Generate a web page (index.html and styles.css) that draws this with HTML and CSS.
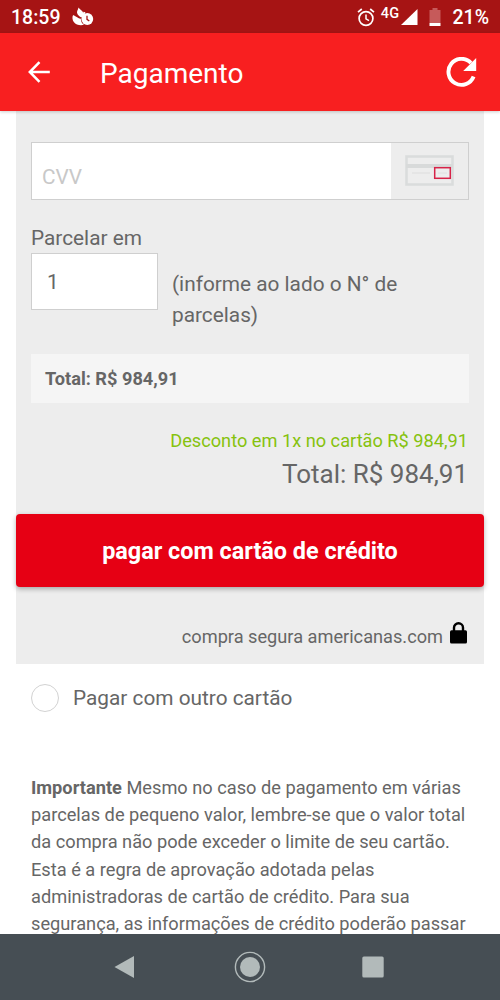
FILE: index.html
```html
<!DOCTYPE html>
<html lang="pt-BR">
<head>
<meta charset="utf-8">
<title>Pagamento</title>
<link rel="stylesheet" href="styles.css">
</head>
<body>
<div class="screen">
  <div class="status">
    <span class="clock">18:59</span>
    <svg class="swirl" width="23" height="20" viewBox="0 0 23 20">
      <path d="M6.500 .5C7.500 2.500 10.500 3.500 11.300 6C11.500 8 10.500 9 9.500 10.500C7.500 9.500 5.300 8 5 5.500C4.900 3.500 6.300 2.500 6.500 .5Z" fill="#fff"/>
      <path d="M1 8.200C3 8.200 5 11 8.800 11.800C9 14.500 10 16.800 12 17.800C8.500 18.800 4 18 1.800 15C.4 13 0 10 1 8.200Z" fill="#fff"/>
      <path d="M12.500 5L10.500 10" stroke="#fff" stroke-width="2"/>
      <circle cx="15.300" cy="12" r="5.900" fill="#fff"/>
      <path d="M15 8.700V12.300L17.300 14" fill="none" stroke="#a61414" stroke-width="1.300"/>
    </svg>
    <div class="indicators">
      <svg class="alarm" width="18" height="19" viewBox="0 0 18 19" fill="none" stroke="#fff">
        <circle cx="9" cy="10.500" r="6.900" stroke-width="1.700"/>
        <path d="M9 6.500V10.800L12 12.600" stroke-width="1.500"/>
        <path d="M1 4.200L4.800 1M17 4.200L13.200 1" stroke-width="1.700"/>
      </svg>
      <span class="net">4G</span>
      <svg class="signal" width="17" height="16" viewBox="0 0 17 16"><path d="M16.500 0V16H0Z" fill="#fff"/></svg>
      <svg class="battery" width="12" height="19" viewBox="0 0 12 19">
        <path d="M3.500 0H8.500V2H11.500V15H.5V2H3.500Z" fill="#c65a5a"/>
        <path d="M.5 15H11.500V18H.5Z" fill="#fff"/>
      </svg>
      <span class="percent">21%</span>
    </div>
  </div>
  <header class="bar">
    <svg class="back" width="22" height="22" viewBox="0 0 22 22" fill="none" stroke="#fff" stroke-width="2.500"><path d="M21.800 11H2M11.500 1.200L1.800 11L11.500 20.800"/></svg>
    <h1 class="title">Pagamento</h1>
    <svg class="reload" width="31" height="31" viewBox="0 0 31 31">
      <path d="M25 6A13 13 0 1 0 27.600 19.500" fill="none" stroke="#fff" stroke-width="3.900"/>
      <path d="M30.200 1V14H17.200Z" fill="#fff"/>
    </svg>
  </header>
  <main class="content">
    <section class="panel">
      <div class="cvv">
        <span class="placeholder">CVV</span>
        <div class="cvv-help">
          <svg width="50" height="32" viewBox="0 0 50 32">
            <rect x="1.500" y="1.500" width="46" height="28" fill="none" stroke="#dadcdc" stroke-width="2.600"/>
            <path d="M1 11H48" stroke="#d8dada" stroke-width="4"/>
            <path d="M7 18H25" stroke="#e2e2e2" stroke-width="1.500"/>
            <rect x="29.700" y="12.700" width="15.600" height="10.600" fill="#ededed" stroke="#d72348" stroke-width="1.500"/>
            <path d="M33 18H42" stroke="#e0e0e0"/>
          </svg>
        </div>
      </div>
      <div class="label">Parcelar em</div>
      <div class="installments">
        <div class="number">1</div>
        <div class="hint">(informe ao lado o N° de<br>parcelas)</div>
      </div>
      <div class="subtotal">Total: R$ 984,91</div>
      <div class="discount">Desconto em 1x no cartão R$ 984,91</div>
      <div class="total">Total: R$ 984,91</div>
      <div class="pay">pagar com cartão de crédito</div>
      <div class="secure">
        <span>compra segura americanas.com</span>
        <svg width="17" height="22" viewBox="0 0 17 22">
          <rect y="8.300" width="17" height="13.200" rx="1.500"/>
          <path d="M4 10V5.800A4.500 4.500 0 0 1 13 5.800V10" fill="none" stroke="#000" stroke-width="2.400"/>
        </svg>
      </div>
    </section>
    <div class="other"><i class="radio"></i><span>Pagar com outro cartão</span></div>
    <p class="notice"><b>Importante</b> Mesmo no caso de pagamento em várias<br>parcelas de pequeno valor, lembre-se que o valor total<br>da compra não pode exceder o limite de seu cartão.<br>Esta é a regra de aprovação adotada pelas<br>administradoras de cartão de crédito. Para sua<br>segurança, as informações de crédito poderão passar</p>
  </main>
  <nav class="nav">
    <svg width="20" height="24" viewBox="0 0 20 24"><path d="M20 1V23L.5 12Z" fill="#b2baba"/></svg>
    <svg width="32" height="32" viewBox="0 0 32 32"><circle cx="16" cy="16" r="14.600" fill="none" stroke="#b2baba" stroke-width="1.400"/><circle cx="16" cy="16" r="10" fill="#b2baba"/></svg>
    <svg class="recent" width="22" height="22" viewBox="0 0 22 22"><rect x=".3" y=".5" width="21.400" height="21" rx="1.500" fill="#b2baba"/></svg>
  </nav>
</div>
</body>
</html>
```
FILE: styles.css
```css
* { box-sizing: border-box; }
body { margin: 0; font-family: Roboto, "Liberation Sans", sans-serif; color: #666; background: #fff; }
svg { display: block; flex: none; }
.screen { width: 500px; height: 1000px; display: flex; flex-direction: column; overflow: hidden; white-space: nowrap; }
.status { height: 33px; flex: none; background: #a61414; color: #fff; display: flex; align-items: center; padding: 2px 11px 0 11px; font-size: 19.500px; font-weight: 500; }
.swirl { margin-left: 12px; margin-top: -2px; }
.indicators { margin-left: auto; display: flex; align-items: center; }
.alarm { margin-top: -1px; }
.net { font-size: 14.500px; margin: -9px 2px 0 6px; letter-spacing: .3px; }
.signal { margin-top: -1px; }
.battery { margin: -1px 11px 0 11px; }
.bar { height: 78px; flex: none; background: #f81f20; color: #fff; display: flex; align-items: center; padding: 0 23px 0 28px; box-shadow: 0 1px 3px rgba(0,0,0,.2); z-index: 1; }
.title { margin: 2px 0 0 50px; font-size: 28px; font-weight: 400; }
.reload { margin: 0 0 0 auto; }
.content { flex: 1; min-height: 0; overflow: hidden; padding: 0 16px; }
.panel { height: 553px; background: #ededed; padding: 31px 15px 0; }
.cvv { height: 58px; border: 1.500px solid #cfcfcf; background: #fff; display: flex; justify-content: space-between; }
.placeholder { color: #c8c8c8; font-size: 20.800px; line-height: 24px; padding: 22px 0 0 10px; }
.cvv-help { width: 77px; background: #ededed; padding: 12px 0 0 14px; }
.label { font-size: 20.800px; line-height: 24px; margin-top: 26px; }
.installments { display: flex; margin-top: 3px; }
.number { width: 127px; height: 57px; border: 1.500px solid #cfcfcf; background: #fff; font-size: 20.800px; line-height: 57px; padding-left: 15px; }
.hint { margin: 16px 0 0 14px; font-size: 20.800px; line-height: 31px; }
.subtotal { height: 49px; margin-top: 23px; background: #f5f5f5; padding-left: 14px; font-size: 18.200px; line-height: 50px; font-weight: 700; }
.discount { margin-top: 26px; padding-right: 1px; text-align: right; color: #86c20e; font-size: 18.200px; line-height: 24px; }
.total { padding-right: 1px; text-align: right; font-size: 26px; line-height: 34px; margin-top: 4px; }
.pay { height: 73px; margin: 23px -15px 0; background: #e60014; border-radius: 4px; box-shadow: 0 2px 5px rgba(0,0,0,.3); color: #fff; text-align: center; font-size: 23.400px; font-weight: 700; line-height: 74px; }
.secure { display: flex; justify-content: flex-end; margin-top: 34px; padding-right: 2px; gap: 7px; font-size: 18.200px; line-height: 32px; }
.secure svg { margin-top: 1px; }
.other { display: flex; align-items: center; height: 68px; padding-left: 15px; gap: 14px; font-size: 20.800px; }
.radio { width: 28px; height: 28px; border: 1.500px solid #d2d2d2; border-radius: 50%; }
.notice { margin: 41.800px 0 0 15px; font-size: 18.230px; line-height: 27.300px; }
.nav { height: 66px; flex: none; background: #464e54; display: flex; align-items: center; gap: 100px; padding-left: 114px; }
.recent { margin-left: -4px; }
```
